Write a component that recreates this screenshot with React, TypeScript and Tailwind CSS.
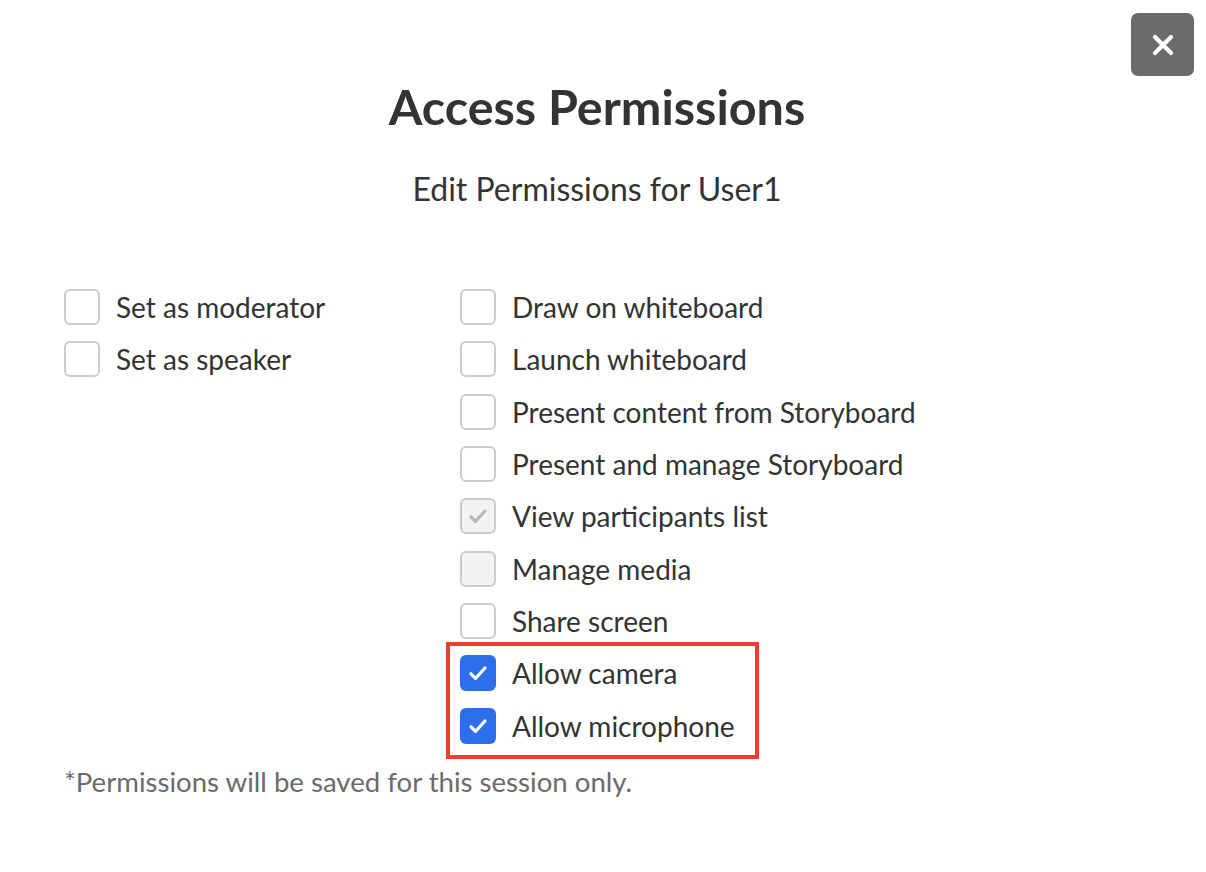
import React from 'react';

type Item = { label: string; state: 'off' | 'on' | 'disabledOn' | 'disabledOff' };

const leftItems: Item[] = [
  { label: 'Set as moderator', state: 'off' },
  { label: 'Set as speaker', state: 'off' },
];

const rightItems: Item[] = [
  { label: 'Draw on whiteboard', state: 'off' },
  { label: 'Launch whiteboard', state: 'off' },
  { label: 'Present content from Storyboard', state: 'off' },
  { label: 'Present and manage Storyboard', state: 'off' },
  { label: 'View participants list', state: 'disabledOn' },
  { label: 'Manage media', state: 'disabledOff' },
  { label: 'Share screen', state: 'off' },
];

const mediaItems: Item[] = [
  { label: 'Allow camera', state: 'on' },
  { label: 'Allow microphone', state: 'on' },
];

function Check({ color }: { color: string }) {
  return (
    <svg viewBox="0 0 24 24" className="w-[24px] h-[24px]" fill="none">
      <path d="M5 12.8l4.5 4.5L19 7" stroke={color} strokeWidth="3.2" strokeLinecap="round" strokeLinejoin="round" />
    </svg>
  );
}

function Box({ state }: { state: Item['state'] }) {
  if (state === 'on') {
    return (
      <span className="w-[36px] h-[36px] rounded-[6px] bg-[#2f6eea] flex items-center justify-center flex-shrink-0">
        <Check color="#ffffff" />
      </span>
    );
  }
  if (state === 'disabledOn') {
    return (
      <span className="w-[36px] h-[36px] rounded-[6px] border-2 border-[#cccccc] bg-[#f3f3f3] flex items-center justify-center flex-shrink-0">
        <Check color="#b9b9b9" />
      </span>
    );
  }
  return (
    <span
      className={`w-[36px] h-[36px] rounded-[6px] border-2 border-[#cccccc] flex-shrink-0 ${
        state === 'disabledOff' ? 'bg-[#f3f3f3]' : 'bg-white'
      }`}
    />
  );
}

function Row({ item }: { item: Item }) {
  return (
    <label className="h-[52.33px] flex items-center gap-[16px]">
      <Box state={item.state} />
      <span className="text-[28px] text-[#333333] leading-none whitespace-nowrap">{item.label}</span>
    </label>
  );
}

export default function App() {
  return (
    <div className="relative w-[1206px] h-[872px] bg-white overflow-hidden font-['Lato',sans-serif]">
      {/* Close */}
      <button className="absolute top-[13px] right-[12px] w-[63px] h-[63px] rounded-[7px] bg-[#6b6b6b] flex items-center justify-center">
        <svg viewBox="0 0 24 24" className="w-[24px] h-[24px]" fill="none">
          <path d="M4 4l16 16M20 4L4 20" stroke="white" strokeWidth="4.2" strokeLinecap="round" />
        </svg>
      </button>

      <div className="pt-[76px] pr-[12px] flex flex-col items-center">
        <h1 className="text-[48.5px] font-bold text-[#333333] leading-[60px]">Access Permissions</h1>
        <p className="mt-[36px] text-[32px] text-[#333333] leading-[34px]">Edit Permissions for User1</p>
      </div>

      <div className="mt-[75px] pl-[64px] flex">
        <div className="w-[396px] flex flex-col">
          {leftItems.map(i => <Row key={i.label} item={i} />)}
        </div>
        <div className="flex flex-col">
          {rightItems.map(i => <Row key={i.label} item={i} />)}
          <div className="relative">
            {mediaItems.map(i => <Row key={i.label} item={i} />)}
            {/* annotation box */}
            <div className="absolute left-[-14px] top-[-5px] w-[313px] h-[117px] border-[4px] border-[#e8402a] pointer-events-none" />
          </div>
        </div>
      </div>

      <p className="mt-[14px] pl-[64px] text-[27.6px] text-[#6b6b6b] leading-[32px]">
        *Permissions will be saved for this session only.
      </p>
    </div>
  );
}
